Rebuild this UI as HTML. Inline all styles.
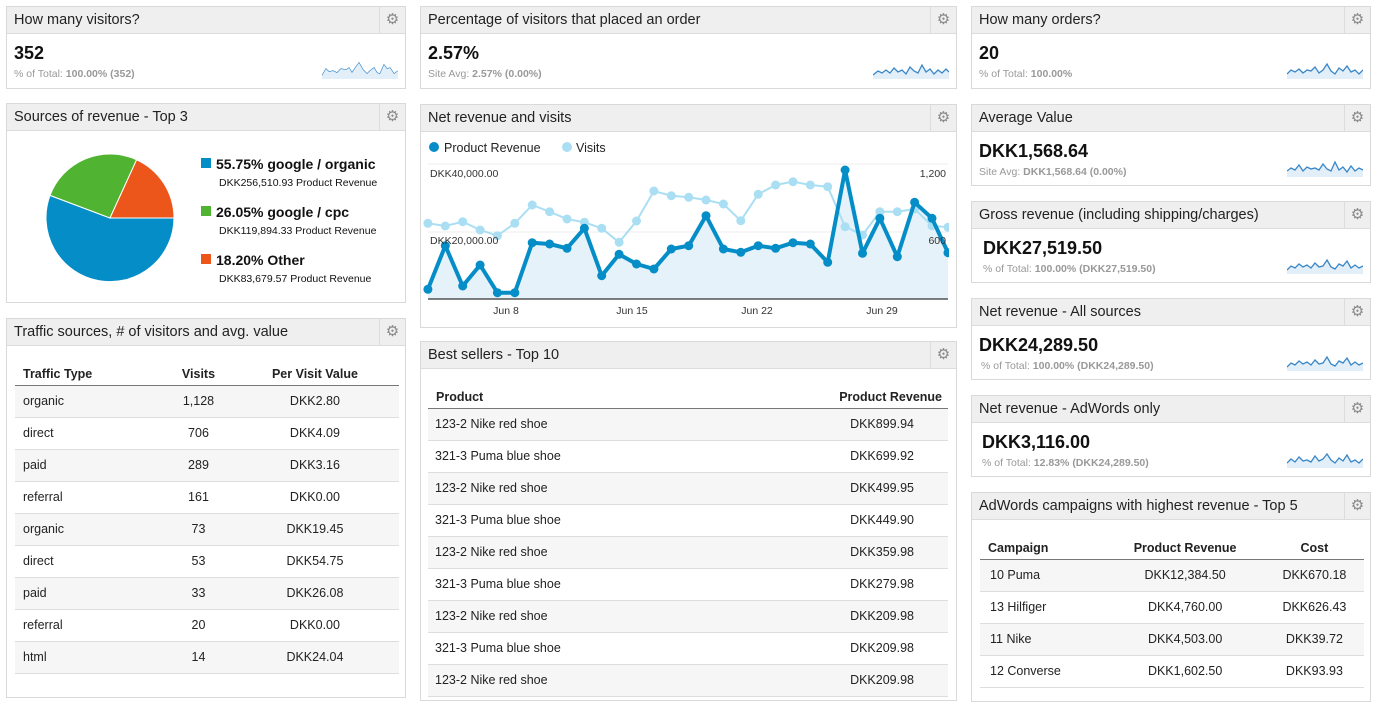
<!DOCTYPE html>
<html><head><meta charset="utf-8"><style>
*{box-sizing:border-box;margin:0;padding:0}
body{width:1375px;height:690px;overflow:hidden;background:#fff;font-family:"Liberation Sans",Arial,sans-serif;color:#222;position:relative}
.p{position:absolute;border:1px solid #d9d9d9;background:#fff}
.h{height:27px;background:#efefef;border-bottom:1px solid #dcdcdc;font-size:14.5px;line-height:26px;padding-left:7px;position:relative;color:#222}
.g{position:absolute;right:0;top:0;width:26px;height:26px;border-left:1px solid #dcdcdc;text-align:center;color:#888;font-size:15px;line-height:26px}
.v{position:absolute;left:7px;top:36px;font-size:18px;font-weight:bold;color:#111}
.s{position:absolute;left:7px;top:61px;font-size:10.5px;color:#999}
.s b{color:#999}
.sp{position:absolute;right:7px;top:54px}
table{border-collapse:collapse;position:absolute;font-size:12.5px}
th{font-weight:bold;font-size:12.5px;height:24px;border-bottom:1px solid #777;vertical-align:bottom;padding-bottom:4px}
td{height:32px;border-bottom:1px solid #ddd}
tr.a td{background:#f6f6f6}
</style></head><body>

<!-- Column 1 -->
<div class="p" style="left:6px;top:6px;width:400px;height:83px"><div class="h">How many visitors?<div class="g">⚙</div></div>
<div class="v">352</div><div class="s">% of Total: <b>100.00%</b> <b>(352)</b></div>
<svg class="sp" width="76" height="18"><polyline points="0,15 4,8 7,11 11,10 15,12 19,8 24,9 27,7 30,12 34,6 37,2 41,9 45,13 48,10 52,7 55,12 58,13 62,4 65,8 68,7 72,13 76,10" fill="none" stroke="#3a87c8" stroke-width="1.3"/><polygon points="0,15 4,8 7,11 11,10 15,12 19,8 24,9 27,7 30,12 34,6 37,2 41,9 45,13 48,10 52,7 55,12 58,13 62,4 65,8 68,7 72,13 76,10 76,18 0,18" fill="#e3eff8"/></svg></div>

<div class="p" style="left:6px;top:103px;width:400px;height:200px"><div class="h">Sources of revenue - Top 3<div class="g">⚙</div></div>
<svg style="position:absolute;left:0;top:0" width="400" height="200">
<g transform="translate(-6,-103)">
<path d="M109,217 L173,217 A64,64 0 1,1 49,194.4 Z" fill="#058dc7" stroke="#fff"/>
<path d="M109,217 L49,194.4 A64,64 0 0,1 135.6,158.8 Z" fill="#50b432" stroke="#fff"/>
<path d="M109,217 L135.6,158.8 A64,64 0 0,1 173,217 Z" fill="#ed561b" stroke="#fff"/>
<rect x="200" y="157" width="10" height="10" fill="#058dc7"/>
<rect x="200" y="205" width="10" height="10" fill="#50b432"/>
<rect x="200" y="253" width="10" height="10" fill="#ed561b"/>
<g font-family="Liberation Sans,Arial,sans-serif" fill="#111">
<text x="215" y="168" font-size="14" font-weight="bold">55.75% google / organic</text>
<text x="218" y="185" font-size="10.5">DKK256,510.93 Product Revenue</text>
<text x="215" y="216" font-size="14" font-weight="bold">26.05% google / cpc</text>
<text x="218" y="233" font-size="10.5">DKK119,894.33 Product Revenue</text>
<text x="215" y="264" font-size="14" font-weight="bold">18.20% Other</text>
<text x="218" y="281" font-size="10.5">DKK83,679.57 Product Revenue</text>
</g></g></svg></div>

<div class="p" style="left:6px;top:318px;width:400px;height:380px"><div class="h">Traffic sources, # of visitors and avg. value<div class="g">⚙</div></div>
<table style="left:8px;top:42px;width:384px">
<tr><th style="text-align:left;padding-left:8px">Traffic Type</th><th>Visits</th><th>Per Visit Value</th></tr>
<tr class="a"><td style="padding-left:8px">organic</td><td align="center">1,128</td><td align="center">DKK2.80</td></tr>
<tr><td style="padding-left:8px">direct</td><td align="center">706</td><td align="center">DKK4.09</td></tr>
<tr class="a"><td style="padding-left:8px">paid</td><td align="center">289</td><td align="center">DKK3.16</td></tr>
<tr><td style="padding-left:8px">referral</td><td align="center">161</td><td align="center">DKK0.00</td></tr>
<tr class="a"><td style="padding-left:8px">organic</td><td align="center">73</td><td align="center">DKK19.45</td></tr>
<tr><td style="padding-left:8px">direct</td><td align="center">53</td><td align="center">DKK54.75</td></tr>
<tr class="a"><td style="padding-left:8px">paid</td><td align="center">33</td><td align="center">DKK26.08</td></tr>
<tr><td style="padding-left:8px">referral</td><td align="center">20</td><td align="center">DKK0.00</td></tr>
<tr class="a"><td style="padding-left:8px">html</td><td align="center">14</td><td align="center">DKK24.04</td></tr>
</table></div>

<!-- Column 2 -->
<div class="p" style="left:420px;top:6px;width:537px;height:83px"><div class="h">Percentage of visitors that placed an order<div class="g">⚙</div></div>
<div class="v">2.57%</div><div class="s">Site Avg: <b>2.57%</b> <b>(0.00%)</b></div>
<svg class="sp" width="76" height="18"><polygon points="0,14 5,10 9,12 13,9 17,12 21,7 25,11 29,9 33,13 37,6 41,10 45,12 49,4 53,11 57,8 61,13 65,9 69,12 73,8 76,11 76,18 0,18" fill="#e3eff8"/><polyline points="0,14 5,10 9,12 13,9 17,12 21,7 25,11 29,9 33,13 37,6 41,10 45,12 49,4 53,11 57,8 61,13 65,9 69,12 73,8 76,11" fill="none" stroke="#3a87c8" stroke-width="1.3"/></svg></div>

<div class="p" style="left:420px;top:104px;width:537px;height:224px"><div class="h">Net revenue and visits<div class="g">⚙</div></div></div>
<svg style="position:absolute;left:0;top:0" width="955" height="330">
<g font-family="Liberation Sans,Arial,sans-serif">
<circle cx="434" cy="147" r="5" fill="#058dc7"/><text x="444" y="152" font-size="12.5" fill="#222">Product Revenue</text>
<circle cx="567" cy="147" r="5" fill="#aadff3"/><text x="576" y="152" font-size="12.5" fill="#222">Visits</text>
<line x1="428" y1="164" x2="948" y2="164" stroke="#eee"/>
<line x1="428" y1="232" x2="948" y2="232" stroke="#eee"/>
<polygon fill="#e6f2f9" points="428,299 427.9,289.3 445.3,245.7 462.7,286 480.1,265 497.4,292.7 514.8,292.7 532.2,242.7 549.6,244 567,248.3 584.4,228.3 601.7,275.7 619.1,254.3 636.5,264 653.9,269 671.3,249 688.7,245.7 706,215.7 723.4,249 740.8,252.3 758.2,245.7 775.6,248.3 793,242.7 810.3,244 827.7,262.3 845.1,170 862.5,253.3 879.9,218.3 897.3,256.7 914.6,202.3 932,218.3 948,252.7 948,299"/>
<polyline fill="none" stroke="#aadff3" stroke-width="2" points="427.9,223.3 445.3,226 462.7,221.7 480.1,230 497.4,235.7 514.8,223.3 532.2,205 549.6,211.7 567,219 584.4,222.3 601.7,228.3 619.1,242.3 636.5,221 653.9,191 671.3,195.7 688.7,197.3 706,200 723.4,204 740.8,220.7 758.2,194.3 775.6,185 793,181.7 810.3,185 827.7,186.7 845.1,226.7 862.5,235 879.9,211.7 897.3,211.7 914.6,209 932,225.7 948,227.3"/>
<g fill="#aadff3">
<circle cx="427.9" cy="223.3" r="4.5"/><circle cx="445.3" cy="226" r="4.5"/><circle cx="462.7" cy="221.7" r="4.5"/><circle cx="480.1" cy="230" r="4.5"/><circle cx="497.4" cy="235.7" r="4.5"/><circle cx="514.8" cy="223.3" r="4.5"/><circle cx="532.2" cy="205" r="4.5"/><circle cx="549.6" cy="211.7" r="4.5"/><circle cx="567" cy="219" r="4.5"/><circle cx="584.4" cy="222.3" r="4.5"/><circle cx="601.7" cy="228.3" r="4.5"/><circle cx="619.1" cy="242.3" r="4.5"/><circle cx="636.5" cy="221" r="4.5"/><circle cx="653.9" cy="191" r="4.5"/><circle cx="671.3" cy="195.7" r="4.5"/><circle cx="688.7" cy="197.3" r="4.5"/><circle cx="706" cy="200" r="4.5"/><circle cx="723.4" cy="204" r="4.5"/><circle cx="740.8" cy="220.7" r="4.5"/><circle cx="758.2" cy="194.3" r="4.5"/><circle cx="775.6" cy="185" r="4.5"/><circle cx="793" cy="181.7" r="4.5"/><circle cx="810.3" cy="185" r="4.5"/><circle cx="827.7" cy="186.7" r="4.5"/><circle cx="845.1" cy="226.7" r="4.5"/><circle cx="862.5" cy="235" r="4.5"/><circle cx="879.9" cy="211.7" r="4.5"/><circle cx="897.3" cy="211.7" r="4.5"/><circle cx="914.6" cy="209" r="4.5"/><circle cx="932" cy="225.7" r="4.5"/><circle cx="948" cy="227.3" r="4.5"/>
</g>
<polyline fill="none" stroke="#058dc7" stroke-width="4" stroke-linejoin="round" points="427.9,289.3 445.3,245.7 462.7,286 480.1,265 497.4,292.7 514.8,292.7 532.2,242.7 549.6,244 567,248.3 584.4,228.3 601.7,275.7 619.1,254.3 636.5,264 653.9,269 671.3,249 688.7,245.7 706,215.7 723.4,249 740.8,252.3 758.2,245.7 775.6,248.3 793,242.7 810.3,244 827.7,262.3 845.1,170 862.5,253.3 879.9,218.3 897.3,256.7 914.6,202.3 932,218.3 948,252.7"/>
<g fill="#058dc7">
<circle cx="427.9" cy="289.3" r="4.5"/><circle cx="445.3" cy="245.7" r="4.5"/><circle cx="462.7" cy="286" r="4.5"/><circle cx="480.1" cy="265" r="4.5"/><circle cx="497.4" cy="292.7" r="4.5"/><circle cx="514.8" cy="292.7" r="4.5"/><circle cx="532.2" cy="242.7" r="4.5"/><circle cx="549.6" cy="244" r="4.5"/><circle cx="567" cy="248.3" r="4.5"/><circle cx="584.4" cy="228.3" r="4.5"/><circle cx="601.7" cy="275.7" r="4.5"/><circle cx="619.1" cy="254.3" r="4.5"/><circle cx="636.5" cy="264" r="4.5"/><circle cx="653.9" cy="269" r="4.5"/><circle cx="671.3" cy="249" r="4.5"/><circle cx="688.7" cy="245.7" r="4.5"/><circle cx="706" cy="215.7" r="4.5"/><circle cx="723.4" cy="249" r="4.5"/><circle cx="740.8" cy="252.3" r="4.5"/><circle cx="758.2" cy="245.7" r="4.5"/><circle cx="775.6" cy="248.3" r="4.5"/><circle cx="793" cy="242.7" r="4.5"/><circle cx="810.3" cy="244" r="4.5"/><circle cx="827.7" cy="262.3" r="4.5"/><circle cx="845.1" cy="170" r="4.5"/><circle cx="862.5" cy="253.3" r="4.5"/><circle cx="879.9" cy="218.3" r="4.5"/><circle cx="897.3" cy="256.7" r="4.5"/><circle cx="914.6" cy="202.3" r="4.5"/><circle cx="932" cy="218.3" r="4.5"/><circle cx="948" cy="252.7" r="4.5"/>
</g>
<rect x="949" y="160" width="7" height="150" fill="#fff"/>
<line x1="428" y1="299" x2="948" y2="299" stroke="#333" stroke-width="1.2"/>
<g font-size="10.5" fill="#333">
<text x="430" y="177">DKK40,000.00</text><text x="430" y="244">DKK20,000.00</text>
<text x="946" y="177" text-anchor="end">1,200</text><text x="946" y="244" text-anchor="end">600</text>
<text x="506" y="314" text-anchor="middle">Jun 8</text><text x="632" y="314" text-anchor="middle">Jun 15</text>
<text x="757" y="314" text-anchor="middle">Jun 22</text><text x="882" y="314" text-anchor="middle">Jun 29</text>
</g></g></svg>

<div class="p" style="left:420px;top:341px;width:537px;height:360px"><div class="h">Best sellers - Top 10<div class="g">⚙</div></div>
<table style="left:7px;top:42px;width:520px">
<tr><th style="text-align:left;padding-left:8px">Product</th><th style="text-align:right;padding-right:6px">Product Revenue</th></tr>
<tr class="a"><td style="padding-left:7px">123-2 Nike red shoe</td><td align="right" style="padding-right:34px">DKK899.94</td></tr>
<tr><td style="padding-left:7px">321-3 Puma blue shoe</td><td align="right" style="padding-right:34px">DKK699.92</td></tr>
<tr class="a"><td style="padding-left:7px">123-2 Nike red shoe</td><td align="right" style="padding-right:34px">DKK499.95</td></tr>
<tr><td style="padding-left:7px">321-3 Puma blue shoe</td><td align="right" style="padding-right:34px">DKK449.90</td></tr>
<tr class="a"><td style="padding-left:7px">123-2 Nike red shoe</td><td align="right" style="padding-right:34px">DKK359.98</td></tr>
<tr><td style="padding-left:7px">321-3 Puma blue shoe</td><td align="right" style="padding-right:34px">DKK279.98</td></tr>
<tr class="a"><td style="padding-left:7px">123-2 Nike red shoe</td><td align="right" style="padding-right:34px">DKK209.98</td></tr>
<tr><td style="padding-left:7px">321-3 Puma blue shoe</td><td align="right" style="padding-right:34px">DKK209.98</td></tr>
<tr class="a"><td style="padding-left:7px">123-2 Nike red shoe</td><td align="right" style="padding-right:34px">DKK209.98</td></tr>
</table></div>

<!-- Column 3 -->
<div class="p" style="left:971px;top:6px;width:400px;height:83px"><div class="h">How many orders?<div class="g">⚙</div></div>
<div class="v">20</div><div class="s">% of Total: <b>100.00%</b></div>
<svg class="sp" width="76" height="18"><polygon points="0,13 4,9 8,11 12,8 16,12 20,9 24,10 28,6 32,12 36,9 40,3 44,10 48,13 52,7 56,10 60,5 64,11 68,9 72,13 76,9 76,18 0,18" fill="#e3eff8"/><polyline points="0,13 4,9 8,11 12,8 16,12 20,9 24,10 28,6 32,12 36,9 40,3 44,10 48,13 52,7 56,10 60,5 64,11 68,9 72,13 76,9" fill="none" stroke="#3a87c8" stroke-width="1.3"/></svg></div>

<div class="p" style="left:971px;top:104px;width:400px;height:82px"><div class="h">Average Value<div class="g">⚙</div></div>
<div class="v">DKK1,568.64</div><div class="s">Site Avg: <b>DKK1,568.64</b> <b>(0.00%)</b></div>
<svg class="sp" width="76" height="18"><polygon points="0,12 4,9 8,11 12,6 16,12 20,8 24,10 28,9 32,11 36,5 40,10 44,12 48,3 52,11 56,8 60,13 64,7 68,12 72,9 76,11 76,18 0,18" fill="#e3eff8"/><polyline points="0,12 4,9 8,11 12,6 16,12 20,8 24,10 28,9 32,11 36,5 40,10 44,12 48,3 52,11 56,8 60,13 64,7 68,12 72,9 76,11" fill="none" stroke="#3a87c8" stroke-width="1.3"/></svg></div>

<div class="p" style="left:971px;top:201px;width:400px;height:82px"><div class="h">Gross revenue (including shipping/charges)<div class="g">⚙</div></div>
<div class="v" style="left:11px">DKK27,519.50</div><div class="s" style="left:11px">% of Total: <b>100.00%</b> <b>(DKK27,519.50)</b></div>
<svg class="sp" width="76" height="18"><polygon points="0,14 4,10 8,12 12,8 16,11 20,9 24,12 28,7 32,11 36,10 40,4 44,11 48,13 52,8 56,10 60,5 64,12 68,9 72,12 76,10 76,18 0,18" fill="#e3eff8"/><polyline points="0,14 4,10 8,12 12,8 16,11 20,9 24,12 28,7 32,11 36,10 40,4 44,11 48,13 52,8 56,10 60,5 64,12 68,9 72,12 76,10" fill="none" stroke="#3a87c8" stroke-width="1.3"/></svg></div>

<div class="p" style="left:971px;top:298px;width:400px;height:82px"><div class="h">Net revenue - All sources<div class="g">⚙</div></div>
<div class="v">DKK24,289.50</div><div class="s" style="left:9px">% of Total: <b>100.00%</b> <b>(DKK24,289.50)</b></div>
<svg class="sp" width="76" height="18"><polygon points="0,14 4,10 8,12 12,8 16,11 20,9 24,12 28,7 32,11 36,10 40,4 44,11 48,13 52,8 56,10 60,5 64,12 68,9 72,12 76,10 76,18 0,18" fill="#e3eff8"/><polyline points="0,14 4,10 8,12 12,8 16,11 20,9 24,12 28,7 32,11 36,10 40,4 44,11 48,13 52,8 56,10 60,5 64,12 68,9 72,12 76,10" fill="none" stroke="#3a87c8" stroke-width="1.3"/></svg></div>

<div class="p" style="left:971px;top:395px;width:400px;height:82px"><div class="h">Net revenue - AdWords only<div class="g">⚙</div></div>
<div class="v" style="left:10px">DKK3,116.00</div><div class="s" style="left:10px">% of Total: <b>12.83%</b> <b>(DKK24,289.50)</b></div>
<svg class="sp" width="76" height="18"><polygon points="0,13 4,9 8,12 12,7 16,11 20,10 24,12 28,6 32,11 36,9 40,4 44,10 48,13 52,8 56,11 60,5 64,12 68,10 72,13 76,9 76,18 0,18" fill="#e3eff8"/><polyline points="0,13 4,9 8,12 12,7 16,11 20,10 24,12 28,6 32,11 36,9 40,4 44,10 48,13 52,8 56,11 60,5 64,12 68,10 72,13 76,9" fill="none" stroke="#3a87c8" stroke-width="1.3"/></svg></div>

<div class="p" style="left:971px;top:492px;width:400px;height:210px"><div class="h">AdWords campaigns with highest revenue - Top 5<div class="g">⚙</div></div>
<table style="left:8px;top:42px;width:384px">
<tr><th style="text-align:left;padding-left:8px">Campaign</th><th>Product Revenue</th><th>Cost</th></tr>
<tr class="a"><td style="padding-left:10px">10 Puma</td><td align="center">DKK12,384.50</td><td align="center">DKK670.18</td></tr>
<tr><td style="padding-left:10px">13 Hilfiger</td><td align="center">DKK4,760.00</td><td align="center">DKK626.43</td></tr>
<tr class="a"><td style="padding-left:10px">11 Nike</td><td align="center">DKK4,503.00</td><td align="center">DKK39.72</td></tr>
<tr><td style="padding-left:10px">12 Converse</td><td align="center">DKK1,602.50</td><td align="center">DKK93.93</td></tr>
</table></div>

</body></html>
